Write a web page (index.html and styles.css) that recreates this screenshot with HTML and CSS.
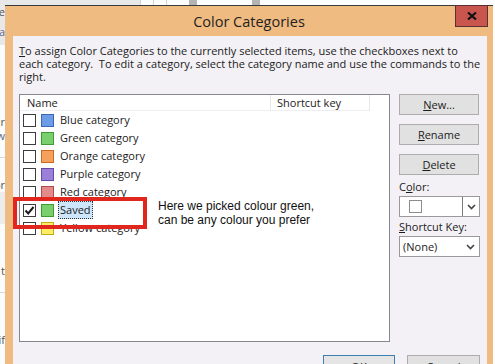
FILE: index.html
```html
<!DOCTYPE html>
<html lang="en">
<head>
    <meta charset="UTF-8">
    <title>Color Categories</title>
    <link rel="stylesheet" href="styles.css">
</head>
<body>
    <div class="screen">
        <!-- Fenêtre derrière le dialogue -->
        <div class="behind-top">
            <div class="bt-gray"></div>
            <div class="bt-line"></div>
            <div class="bt-line"></div>
            <div class="bt-line"></div>
            <div class="bt-grip"></div>
            <div class="bt-grip bt-grip2"></div>
        </div>
        <div class="stage">
            <div class="behind-left">
                <div class="bl-frag bl-gray">e</div>
                <div class="bl-frag bl-gray bl-blue">ca</div>
                <div class="bl-frag bl-gap1">ur</div>
                <div class="bl-frag bl-blue">w</div>
                <div class="bl-rule"></div>
                <div class="bl-frag bl-gap2">or</div>
                <div class="bl-band"></div>
                <div class="bl-frag bl-gap3">t</div>
                <div class="bl-rule"></div>
                <div class="bl-frag bl-gap4">if</div>
            </div>

            <div class="dialog">
                <div class="titlebar">
                    <span></span>
                    <div class="title">Color Categories</div>
                    <div class="close">
                        <svg width="10" height="8" viewBox="0 0 10 8"><path d="M1 0.5 L9 7.5 M9 0.5 L1 7.5" stroke="#111" stroke-width="2.2" fill="none"/></svg>
                    </div>
                </div>

                <div class="client">
                    <p class="intro"><u>T</u>o assign Color Categories to the currently selected items, use the checkboxes next to<br>each category.&nbsp; To edit a category, select the category name and use the commands to the<br>right.</p>

                    <div class="main">
                        <div class="listbox">
                            <div class="list-head">
                                <div class="col-name">Name</div>
                                <div class="col-key">Shortcut key</div>
                                <div class="col-rest"></div>
                            </div>
                            <div class="row"><span class="check"></span><span class="swatch blue"></span><span class="label">Blue category</span></div>
                            <div class="row"><span class="check"></span><span class="swatch green"></span><span class="label">Green category</span></div>
                            <div class="row"><span class="check"></span><span class="swatch orange"></span><span class="label">Orange category</span></div>
                            <div class="row"><span class="check"></span><span class="swatch purple"></span><span class="label">Purple category</span></div>
                            <div class="row"><span class="check"></span><span class="swatch red"></span><span class="label">Red category</span></div>
                            <div class="row">
                                <span class="check">
                                    <svg width="11" height="11" viewBox="0 0 11 11"><path d="M1.5 5.5 L4.2 8.5 L9.5 2" stroke="#1a1a1a" stroke-width="2" fill="none"/></svg>
                                </span>
                                <span class="swatch green"></span><span class="label selected">Saved</span>
                            </div>
                            <div class="row"><span class="check"></span><span class="swatch yellow"></span><span class="label">Yellow category</span></div>
                        </div>

                        <div class="side">
                            <div class="btn"><u>N</u>ew...</div>
                            <div class="btn"><u>R</u>ename</div>
                            <div class="btn"><u>D</u>elete</div>
                            <div class="field-label first">C<u>o</u>lor:</div>
                            <div class="combo">
                                <span class="combo-swatch"></span>
                                <span class="combo-arrow">
                                    <svg width="9" height="6" viewBox="0 0 9 6"><path d="M1 1 L4.5 4.5 L8 1" stroke="#444" stroke-width="1.6" fill="none"/></svg>
                                </span>
                            </div>
                            <div class="field-label"><u>S</u>hortcut Key:</div>
                            <div class="combo">
                                <span class="combo-text">(None)</span>
                                <span class="combo-chev">
                                    <svg width="9" height="6" viewBox="0 0 9 6"><path d="M1 1 L4.5 4.5 L8 1" stroke="#444" stroke-width="1.6" fill="none"/></svg>
                                </span>
                            </div>
                        </div>
                    </div>

                    <div class="footer">
                        <div class="btn default">OK</div>
                        <div class="btn cancel">Cancel</div>
                    </div>
                </div>
            </div>
        </div>

        <!-- Annotation par-dessus la capture -->
        <div class="note-box"></div>
        <div class="note-text">Here we picked colour green,<br>can be any colour you prefer</div>
    </div>
</body>
</html>
```

FILE: styles.css
```css
body {
    margin: 0;
    padding: 0;
    font-family: "Open Sans", "Noto Sans", sans-serif;
    font-size: 11px;
    color: #1b1b1b;
}
.screen {
    position: relative;
    width: 495px;
    height: 364px;
    overflow: hidden;
    background: #fdfdfd;
}

/* fenêtre d'arrière-plan */
.behind-top {
    display: flex;
    height: 5px;
    background: #fefefe;
}
.bt-gray {
    width: 140px;
    background: #e6e8ea;
}
.bt-line {
    width: 12px;
    border-left: 1px solid #d4d4d4;
}
.bt-line:nth-child(4) {
    width: 22px;
}
.bt-grip {
    width: 8px;
    background: #b4b4b4;
}
.bt-grip2 {
    margin-left: 55px;
}
.stage {
    display: flex;
    height: 359px;
}
.behind-left {
    width: 5px;
    display: flex;
    flex-direction: column;
    overflow: hidden;
    background: #fcfcfc;
    color: #555;
    font-size: 11px;
}
.bl-frag {
    display: flex;
    justify-content: flex-end;
    height: 14px;
    line-height: 14px;
    white-space: nowrap;
}
.bl-gray {
    background: #e8e8ea;
    height: 20px;
}
.bl-blue {
    color: #5a6a8a;
}
.bl-gap1 { margin-top: 70px; }
.bl-rule {
    height: 1px;
    background: #d8d8d8;
    margin-top: 14px;
}
.bl-gap2 { margin-top: 20px; }
.bl-band {
    height: 32px;
    background: #ececec;
}
.bl-gap3 { margin-top: 40px; }
.bl-gap4 { margin-top: 40px; }

/* dialogue */
.dialog {
    width: 488px;
    display: flex;
    flex-direction: column;
    background: #f0bb81;
    border-top: 1px solid #3a3a3a;
}
.titlebar {
    display: grid;
    grid-template-columns: 1fr auto 1fr;
    height: 30px;
}
.title {
    font-size: 14.5px;
    line-height: 31px;
    color: #222;
}
.close {
    justify-self: end;
    align-self: start;
    width: 31px;
    height: 20px;
    margin-right: 5px;
    margin-top: -1px;
    background: #c9564e;
    border: 1px solid #5a3030;
    display: flex;
    align-items: center;
    justify-content: center;
}
.client {
    margin: 0 6px 0 8px;
    padding: 8px 7px 0 6px;
    background: #f3f1f5;
    flex: 1;
}
.intro {
    margin: 0;
    line-height: 13px;
    white-space: nowrap;
}
.intro u, .btn u, .field-label u {
    text-decoration-thickness: 1px;
    text-underline-offset: 1px;
}
.main {
    display: flex;
    gap: 9px;
    margin-top: 11px;
}
.listbox {
    width: 369px;
    height: 246px;
    border: 1px solid #85888e;
    background: #fff;
}
.list-head {
    display: flex;
    height: 16px;
    line-height: 16px;
}
.col-name {
    width: 243px;
    padding-left: 7px;
    border-right: 1px solid #e8e8ec;
    border-bottom: 1px solid #eeeef0;
}
.col-key {
    width: 92px;
    padding-left: 6px;
    border-right: 1px solid #e8e8ec;
    border-bottom: 1px solid #eeeef0;
}
.col-rest {
    flex: 1;
}
.row {
    display: flex;
    align-items: center;
    height: 18px;
    padding-left: 3px;
}
.check {
    width: 11px;
    height: 11px;
    border: 1px solid #3d3d3d;
    background: #fff;
    display: flex;
    align-items: center;
    justify-content: center;
}
.swatch {
    width: 11px;
    height: 11px;
    margin-left: 5px;
    border: 1px solid;
}
.blue { background: #6d9ce6; border-color: #3867bb; }
.green { background: #79cf6b; border-color: #3f9a35; }
.orange { background: #f5a05c; border-color: #cb6b22; }
.purple { background: #9c80d8; border-color: #6548ac; }
.red { background: #e38b8b; border-color: #b24a4a; }
.yellow { background: #fbee64; border-color: #c4a91c; }
.label {
    margin-left: 4px;
    padding: 0 1px;
    line-height: 16px;
    border: 1px dotted transparent;
}
.selected {
    background: #cde6fb;
    border-color: #333;
}

/* colonne de droite */
.side {
    width: 81px;
    display: flex;
    flex-direction: column;
}
.btn {
    width: 78px;
    height: 19px;
    line-height: 19px;
    margin-bottom: 9px;
    text-align: center;
    background: #e1e1e1;
    border: 1px solid #adadad;
}
.side .btn:nth-child(3) {
    margin-bottom: 0;
}
.field-label {
    height: 17px;
    line-height: 16px;
    padding-top: 2px;
}
.field-label.first {
    padding-top: 4px;
}
.combo {
    display: flex;
    align-items: center;
    height: 19px;
    width: 79px;
    border: 1px solid #9a9a9a;
    background: #fff;
}
.combo-swatch {
    width: 11px;
    height: 11px;
    margin-left: 9px;
    border: 1px solid #8c8c8c;
    flex: none;
}
.combo-arrow {
    margin-left: auto;
    width: 16px;
    height: 19px;
    border-left: 1px solid #7a7a7a;
    display: flex;
    align-items: center;
    justify-content: center;
}
.combo-text {
    margin-left: 3px;
    line-height: 19px;
}
.combo-chev {
    margin-left: auto;
    margin-right: 4px;
    display: flex;
}
.footer {
    display: flex;
    justify-content: flex-end;
    gap: 12px;
    margin-top: 13px;
}
.footer .btn {
    width: 70px;
    height: 20px;
    line-height: 22px;
    margin: 0;
}
.footer .default {
    border: 1px solid #3c7fb1;
    background: #e5e5e5;
}
.footer .cancel {
    width: 71px;
}

/* annotation rouge */
.note-box {
    position: absolute;
    left: 13px;
    top: 197px;
    width: 126px;
    height: 24px;
    border: 4px solid #e1261d;
}
.note-text {
    position: absolute;
    left: 158px;
    top: 199px;
    font-family: "Liberation Sans", Arial, sans-serif;
    font-size: 12px;
    line-height: 14px;
    color: #111;
}
```
